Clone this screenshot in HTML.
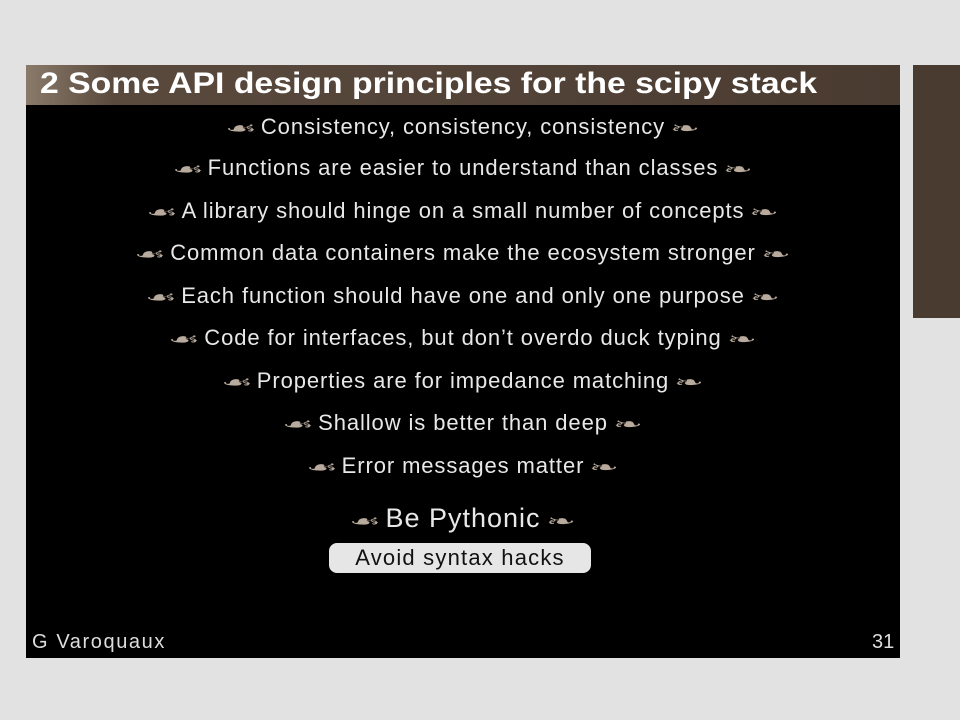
<!DOCTYPE html>
<html><head><meta charset="utf-8"><style>
body{margin:0;width:960px;height:720px;background:#e2e2e2;position:relative;overflow:hidden;font-family:"Liberation Sans",sans-serif}
.slide{position:absolute;left:26px;top:65px;width:874px;height:593px;background:#000}
.head{position:absolute;left:0;top:0;width:874px;height:40px;background:linear-gradient(90deg,#8a7a6a 0,#5a4a3e 10%,#4a3b31 100%)}
.head span{position:absolute;left:14px;top:2px;color:#fff;font-weight:bold;font-size:30px;white-space:nowrap;transform:scaleX(1.125);transform-origin:left}
.rp{position:absolute;left:913px;top:65px;width:47px;height:253px;background:#4a3b31}
.l{position:absolute;left:0;width:874px;text-align:center;color:#e8e8e8;font-size:22px;letter-spacing:0.9px;white-space:nowrap}
.o{display:inline-block;width:40px;text-align:center;color:#b8aa9c;font-family:"DejaVu Sans",sans-serif;font-size:17px;transform:scaleX(2.1);letter-spacing:0}
.box{position:absolute;left:303px;top:478px;width:262px;height:30px;background:#e6e6e6;border-radius:8px;color:#111;font-size:22px;letter-spacing:1.2px;text-align:center;line-height:30px}
.ft{position:absolute;color:#ddd;font-size:20px;letter-spacing:1.6px;top:566px}
</style></head><body>
<div class="slide">
<div class="head"><span>2 Some API design principles for the scipy stack</span></div>
<div class="l" style="top:49px"><span class="o">☙</span>Consistency, consistency, consistency<span class="o">❧</span></div>
<div class="l" style="top:90px"><span class="o">☙</span>Functions are easier to understand than classes<span class="o">❧</span></div>
<div class="l" style="top:133px"><span class="o">☙</span>A library should hinge on a small number of concepts<span class="o">❧</span></div>
<div class="l" style="top:175px"><span class="o">☙</span>Common data containers make the ecosystem stronger<span class="o">❧</span></div>
<div class="l" style="top:218px"><span class="o">☙</span>Each function should have one and only one purpose<span class="o">❧</span></div>
<div class="l" style="top:260px"><span class="o">☙</span>Code for interfaces, but don’t overdo duck typing<span class="o">❧</span></div>
<div class="l" style="top:303px"><span class="o">☙</span>Properties are for impedance matching<span class="o">❧</span></div>
<div class="l" style="top:345px"><span class="o">☙</span>Shallow is better than deep<span class="o">❧</span></div>
<div class="l" style="top:388px"><span class="o">☙</span>Error messages matter<span class="o">❧</span></div>
<div class="l" style="top:438px;font-size:27px;letter-spacing:1px"><span class="o">☙</span>Be Pythonic<span class="o">❧</span></div>
<div class="box">Avoid syntax hacks</div>
<div class="ft" style="left:6px">G Varoquaux</div>
<div class="ft" style="left:846px;letter-spacing:0">31</div>
</div>
<div class="rp"></div>
</body></html>
